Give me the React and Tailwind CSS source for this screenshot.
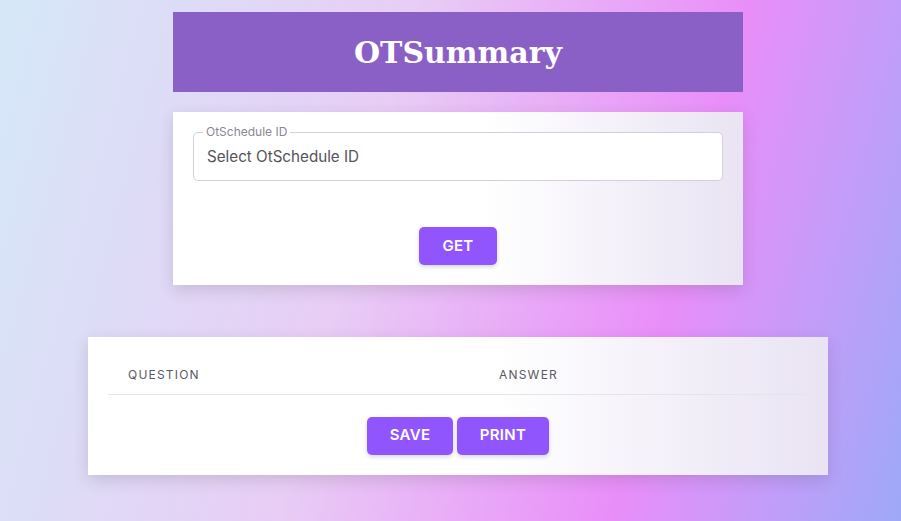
import React, { useState } from 'react';

const btnClasses =
  'h-[38px] rounded-[5px] bg-[#9155fd] text-white text-[15px] font-semibold ' +
  'tracking-[0.3px] shadow-[0_2px_4px_rgba(58,53,65,0.2)] hover:bg-[#804bdf]';

const cardClasses =
  'bg-[linear-gradient(to_right,#ffffff_55%,#e9e3f3_100%)] ' +
  'shadow-[0_5px_14px_rgba(58,53,65,0.16)]';

const OTSummary = () => {
  const [scheduleId, setScheduleId] = useState('');
  const [rows] = useState([]);

  return (
    <div className="min-h-[521px] w-full pl-[15px] bg-[linear-gradient(105deg,#d5e8f8_0%,#e8cdf5_40%,#e98ef9_72%,#c49cf9_86%,#9ea9f8_100%)] font-['Inter',sans-serif] pt-3 pb-10">
      <div className="w-[570px] mx-auto">
        {/* Title bar */}
        <div className="h-20 bg-[#8a60c6] flex items-center justify-center">
          <h1 className="text-white text-[30px] font-bold font-['DejaVu_Serif',serif] leading-none pt-[1px]">
            OTSummary
          </h1>
        </div>

        {/* Select card */}
        <div className={`mt-5 p-5 ${cardClasses}`}>
          <div className="relative h-[49px] border border-[#d3d0d9] rounded-[5px] px-[13px] bg-white flex items-center">
            <label className="absolute -top-[8px] left-[9px] px-[3px] bg-white text-[12px] leading-[14px] text-[#8a8791]">
              OtSchedule ID
            </label>
            <input
              value={scheduleId}
              onChange={e => setScheduleId(e.target.value)}
              placeholder="Select OtSchedule ID"
              className="w-full text-[15.2px] text-[#55535b] placeholder:text-[#55535b] outline-none bg-transparent pt-[1px]"
            />
          </div>
          <div className="flex justify-center mt-[46px]">
            <button className={`${btnClasses} w-[78px]`}>GET</button>
          </div>
        </div>
      </div>

      {/* Result card */}
      <div className={`w-[740px] mx-auto mt-[52px] p-5 ${cardClasses}`}>
        <table className="w-full border-collapse">
          <thead>
            <tr className="border-b border-[#e6e4ea]">
              <th className="w-[371px] text-left pl-5 h-[37px] text-[12px] font-normal tracking-[1.2px] text-[#5b5963]">
                QUESTION
              </th>
              <th className="text-left pl-5 text-[12px] font-normal tracking-[1.2px] text-[#5b5963]">
                ANSWER
              </th>
            </tr>
          </thead>
          <tbody>
            {rows.map(row => (
              <tr key={row.id}>
                <td>{row.question}</td>
                <td>{row.answer}</td>
              </tr>
            ))}
          </tbody>
        </table>
        <div className="flex justify-center gap-1 mt-[22px]">
          <button className={`${btnClasses} w-[86px]`}>SAVE</button>
          <button className={`${btnClasses} w-[92px]`}>PRINT</button>
        </div>
      </div>
    </div>
  );
};

export default function App() {
  return <OTSummary />;
}
